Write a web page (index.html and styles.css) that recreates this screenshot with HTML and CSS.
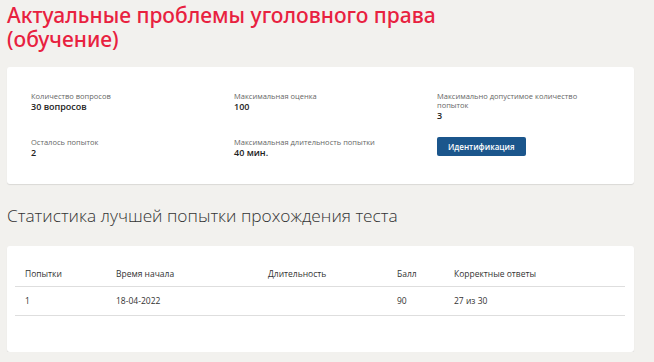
FILE: index.html
```html
<!DOCTYPE html>
<html lang="ru">
<head>
    <meta charset="UTF-8">
    <meta name="viewport" content="width=device-width, initial-scale=1.0">
    <title>Актуальные проблемы уголовного права</title>
    <link rel="stylesheet" href="styles.css">
</head>
<body>
    <div class="page">
        <h1 class="test-title">Актуальные проблемы уголовного права (обучение)</h1>

        <div class="card info-card">
            <div class="info-grid">
                <div class="info-item">
                    <div class="info-label">Количество вопросов</div>
                    <div class="info-value">30 вопросов</div>
                </div>
                <div class="info-item">
                    <div class="info-label">Максимальная оценка</div>
                    <div class="info-value">100</div>
                </div>
                <div class="info-item">
                    <div class="info-label">Максимально допустимое количество попыток</div>
                    <div class="info-value">3</div>
                </div>
                <div class="info-item">
                    <div class="info-label">Осталось попыток</div>
                    <div class="info-value">2</div>
                </div>
                <div class="info-item">
                    <div class="info-label">Максимальная длительность попытки</div>
                    <div class="info-value">40 мин.</div>
                </div>
                <div class="info-item">
                    <button class="btn-ident">Идентификация</button>
                </div>
            </div>
        </div>

        <h2 class="section-title">Статистика лучшей попытки прохождения теста</h2>

        <div class="card stats-card">
            <table class="stats-table">
                <thead>
                    <tr>
                        <th class="col-try">Попытки</th>
                        <th class="col-start">Время начала</th>
                        <th class="col-dur">Длительность</th>
                        <th class="col-score">Балл</th>
                        <th>Корректные ответы</th>
                    </tr>
                </thead>
                <tbody>
                    <tr>
                        <td>1</td>
                        <td>18-04-2022</td>
                        <td></td>
                        <td>90</td>
                        <td>27 из 30</td>
                    </tr>
                </tbody>
            </table>
        </div>
    </div>
</body>
</html>
```

FILE: styles.css
```css
body {
    margin: 0;
    background-color: #f2f1ee;
    font-family: "Open Sans", "Noto Sans", sans-serif;
    color: #333;
}
.page {
    padding: 0 20px 0 7px;
}
.test-title {
    margin: 0;
    padding-top: 3px;
    width: 440px;
    font-family: "Noto Sans", sans-serif;
    font-size: 21px;
    font-weight: 500;
    line-height: 24px;
    color: #e8213f;
}
.card {
    background-color: #fff;
    border-radius: 3px;
    box-shadow: 0 1px 1px rgba(0, 0, 0, 0.1);
}
.info-card {
    margin-top: 16px;
    padding: 25px 0 26px 24px;
}
.info-grid {
    display: grid;
    grid-template-columns: 203px 203px 160px;
    row-gap: 17px;
}
.info-label {
    font-size: 7.5px;
    line-height: 9px;
    color: #666;
}
.info-value {
    font-size: 9px;
    line-height: 11px;
    font-weight: 600;
    color: #222;
}
.btn-ident {
    display: block;
    margin-top: -1px;
    padding: 0 11px;
    height: 19px;
    border: none;
    border-radius: 2px;
    background-color: #1b568c;
    color: #fff;
    font-family: "Open Sans", sans-serif;
    font-size: 8px;
    font-weight: 600;
    cursor: pointer;
}
.section-title {
    margin: 0;
    padding-top: 20px;
    font-family: "Open Sans", sans-serif;
    font-size: 17.3px;
    font-weight: 300;
    line-height: 23px;
    color: #333;
}
.stats-card {
    margin-top: 19px;
    padding: 14px 9px 36px 8px;
}
.stats-table {
    width: 100%;
    border-collapse: collapse;
    font-size: 8.5px;
}
.stats-table th,
.stats-table td {
    text-align: left;
    padding: 7px 0 7px 10px;
    border-bottom: 1px solid #dedede;
    color: #333;
    font-weight: 400;
}
.stats-table th {
    padding-top: 8px;
}
.stats-table td {
    padding-top: 8px;
    padding-bottom: 9px;
}
.col-try { width: 81px; }
.col-start { width: 142px; }
.col-dur { width: 119px; }
.col-score { width: 47px; }
```
